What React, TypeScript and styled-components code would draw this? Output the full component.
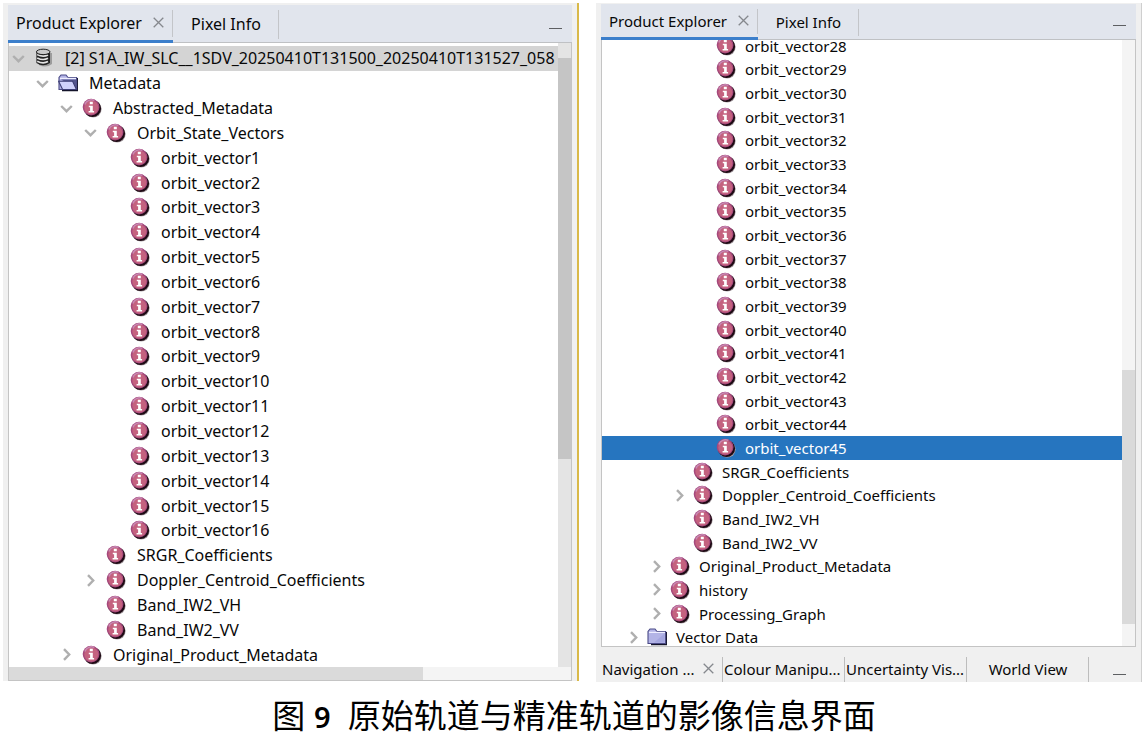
import React from "react";
import styled, { createGlobalStyle, css } from "styled-components";

const GlobalStyle = createGlobalStyle`
  *, *::before, *::after { box-sizing: border-box; }
  body { margin: 0; background: #fff; color: #080808; font-family: "Noto Sans", "Noto Sans CJK SC", sans-serif; }
  button { font: inherit; color: inherit; background: none; border: 0; padding: 0; margin: 0; cursor: pointer; }
  ul { list-style: none; margin: 0; padding: 0; }
`;

type Size = "large" | "small";

const Page = styled.div`
  display: flex;
  flex-direction: column;
  min-height: 100vh;
`;

const Panes = styled.main`
  flex: 1;
  display: grid;
  grid-template-columns: minmax(0, 576fr) minmax(0, 546fr);
  gap: 17px;
  padding: 3px 6px 0 3px;
`;

const Pane = styled.section<{ $size: Size }>`
  display: flex;
  flex-direction: column;
  background: #f0f0f0;
  font-size: ${(p) => (p.$size === "large" ? 16 : 15)}px;
  line-height: 20px;
  ${(p) =>
    p.$size === "large"
      ? css`
          padding: 2px 5px 0 5px;
          margin-bottom: 1px;
          border-right: 2px solid #d9b949;
        `
      : css`
          padding: 1px 5px 0 5px;
          border-right: 1px solid #cfcfcf;
        `}
`;

const TabBar = styled.div<{ $size: Size }>`
  display: flex;
  height: ${(p) => (p.$size === "large" ? 38 : 36)}px;
  background: #e1e5ed;
  border-bottom: 1px solid #bfc1c4;
`;

const Tab = styled.div<{ $width: number; $active?: boolean }>`
  position: relative;
  display: flex;
  align-items: center;
  justify-content: ${(p) => (p.$active ? "space-between" : "center")};
  width: ${(p) => p.$width}px;
  padding: ${(p) => (p.$active ? "0 9px 0 8px" : "0")};
  white-space: nowrap;
  &::after {
    content: "";
    position: absolute;
    top: 5px;
    bottom: 3px;
    right: 0;
    width: 1px;
    background: #c3c5c9;
  }
  ${(p) =>
    p.$active &&
    css`
      margin-bottom: -1px;
      border-bottom: 3px solid #3c7fcb;
    `}
`;

const MinimiseButton = styled.button`
  display: flex;
  align-items: flex-end;
  margin-left: auto;
  padding: 0 10px 13px;
  &::after {
    content: "";
    width: 13px;
    height: 1px;
    background: #5d5f62;
  }
`;

const CloseButton = styled.button`
  display: flex;
  color: #85888d;
`;

const TreeFrame = styled.div`
  flex: 1;
  display: grid;
  grid-template-columns: minmax(0, 1fr) 13px;
  grid-template-rows: minmax(0, 1fr) auto;
  background: #fff;
  border: 1px solid #c4c4c4;
  border-top: 0;
  overflow: hidden;
`;

const Tree = styled.ul<{ $size: Size }>`
  display: grid;
  grid-auto-rows: minmax(20px, 1fr);
  overflow: hidden;
  ${(p) => (p.$size === "large" ? "padding-top: 3px;" : "margin-top: -6px; margin-bottom: -3px;")}
`;

const TreeRow = styled.li<{ $size: Size; $level: number; $tone?: "root" | "selected" }>`
  display: flex;
  align-items: center;
  gap: ${(p) => (p.$size === "large" ? 9 : 7)}px;
  padding-left: ${(p) => (p.$size === "large" ? 3 + p.$level * 24 : 2 + p.$level * 23)}px;
  white-space: nowrap;
  ${(p) => p.$tone === "root" && "background: #d4d4d4;"}
  ${(p) =>
    p.$tone === "selected" &&
    css`
      background: #2675bf;
      color: #fff;
    `}
`;

const RowLabel = styled.span`
  padding-left: 2px;
`;

const Toggle = styled.button`
  display: flex;
  flex: none;
  width: 13px;
  justify-content: center;
  color: #afafaf;
`;

const ToggleSpace = styled.span`
  flex: none;
  width: 13px;
`;

const RowIcon = styled.svg`
  flex: none;
  width: 20px;
  height: 20px;
`;

const ScrollTrack = styled.div<{ $shade: string; $lead: number; $thumb: number; $rest: number; $thumbShade: string; $flat?: boolean }>`
  display: grid;
  background: ${(p) => p.$shade};
  ${(p) =>
    p.$flat
      ? css`
          grid-column: 1 / -1;
          height: 13px;
          grid-template-columns: ${p.$lead}fr ${p.$thumb}fr ${p.$rest}fr;
        `
      : css`
          grid-template-rows: ${p.$lead}fr ${p.$thumb}fr ${p.$rest}fr;
        `}
  &::after {
    content: "";
    background: ${(p) => p.$thumbShade};
    ${(p) => (p.$flat ? "grid-column: 2;" : "grid-row: 2;")}
  }
`;

const DockBar = styled.div`
  display: flex;
  height: 25px;
  margin-top: 10px;
`;

const DockTab = styled.div<{ $width: number; $align?: "center" | "closable" }>`
  display: flex;
  align-items: center;
  justify-content: ${(p) => (p.$align === "center" ? "center" : "space-between")};
  width: ${(p) => p.$width}px;
  padding: 0 ${(p) => (p.$align === "closable" ? 8 : 0)}px 2px 1px;
  border-right: 1px solid #bdbdbd;
  white-space: nowrap;
`;

const DockMinimise = styled(MinimiseButton)`
  padding-bottom: 7px;
`;

const Caption = styled.p`
  margin: 0;
  height: 59px;
  padding-top: 10px;
  text-align: center;
  white-space: pre-wrap;
  font-family: KaiTi, "Noto Sans", "Noto Sans CJK SC", sans-serif;
  font-size: 33px;
  line-height: 48px;
  color: #000;
`;

const FigureNumber = styled.span`
  font-size: 29px;
  font-weight: 600;
`;

const Chevron = ({ open }: { open?: boolean }) => (
  <svg width="13" height="13" viewBox="0 0 13 13" fill="none" stroke="currentColor" strokeWidth="2.4" aria-hidden="true">
    <path d={open ? "M1.2 4 L6.5 9.2 L11.8 4" : "M4 1.2 L9.2 6.5 L4 11.8"} />
  </svg>
);

const CloseIcon = () => (
  <svg width="11" height="11" viewBox="0 0 11 11" stroke="currentColor" strokeWidth="1.3" aria-hidden="true">
    <path d="M.7 .7 L10.3 10.3 M10.3 .7 L.7 10.3" />
  </svg>
);

const InfoIcon = () => (
  <RowIcon viewBox="0 0 20 20" aria-hidden="true">
    <ellipse cx="11.2" cy="11.2" rx="8.4" ry="8.4" fill="#aaa2a6" />
    <ellipse cx="10.5" cy="10.5" rx="8.6" ry="8.6" fill="#1e0a14" />
    <circle cx="9.1" cy="9.1" r="8.4" fill="#a5487c" />
    <circle cx="9.3" cy="9.5" r="7" fill="#c4627f" />
    <path d="M2.8 6.4 A7.2 7.2 0 0 1 12.4 2.4" fill="none" stroke="#c98ab4" strokeWidth="1.5" />
    <path d="M7.8 3.8h3v2.4h-3z M6.8 7.7h4v5.4h1.3v1.5H6.6v-1.5h1.5V9.2H6.8z" fill="#fff" />
  </RowIcon>
);

const FolderIcon = ({ open }: { open?: boolean }) => (
  <RowIcon viewBox="0 0 20 20" aria-hidden="true">
    <path d="M4 17.4 H19.4 V5" fill="none" stroke="#14142a" strokeWidth="1.5" />
    <path d="M1 16.5 V4.5 L3 2 H8 L10 4.5 H18.6 V16.5 Z" fill="#b3b4e6" stroke="#4b4b87" strokeWidth="1.1" />
    <path d="M2 5.4 H18" stroke="#eeeeff" strokeWidth="1.2" />
    {open ? (
      <>
        <path d="M3 6.5 H18 V15 Z" fill="#55578f" />
        <path d="M.6 8.3 H14.6 L18.4 16.5 H4.6 Z" fill="#cfd1fb" stroke="#3d3e75" strokeWidth="1.1" />
      </>
    ) : (
      <path d="M17.6 6.5 V15.6 H7 Z" fill="#9c9edb" opacity=".65" />
    )}
  </RowIcon>
);

const DatabaseIcon = () => (
  <RowIcon viewBox="0 0 20 20" aria-hidden="true">
    <path d="M5 5 H18 V16 Q12 20.5 5 17 Z" fill="#777" opacity=".6" />
    <path d="M2.4 4 V15 Q9 19.5 16 15 V4 Z" fill="#222" />
    <path d="M3.2 6.6 Q9 9.6 14 7 M3.2 9.9 Q9 12.9 14 10.3 M3.2 13.2 Q9 16.2 14 13.6" fill="none" stroke="#e4e4e4" strokeWidth="1.7" />
    <ellipse cx="9.2" cy="3.9" rx="6.8" ry="2.7" fill="#c9c9c9" stroke="#222" strokeWidth="1" />
  </RowIcon>
);

interface Node {
  label: string;
  level: number;
  icon?: "info" | "folder" | "folder-open" | "database";
  state?: "open" | "closed";
  tone?: "root" | "selected";
}

const vectors = (from: number, to: number, level: number): Node[] =>
  Array.from({ length: to - from + 1 }, (_, i) => ({ label: `orbit_vector${from + i}`, level }));

const originalOrbit: Node[] = [
  { label: "[2] S1A_IW_SLC__1SDV_20250410T131500_20250410T131527_058", level: 0, icon: "database", state: "open", tone: "root" },
  { label: "Metadata", level: 1, icon: "folder-open", state: "open" },
  { label: "Abstracted_Metadata", level: 2, state: "open" },
  { label: "Orbit_State_Vectors", level: 3, state: "open" },
  ...vectors(1, 16, 4),
  { label: "SRGR_Coefficients", level: 3 },
  { label: "Doppler_Centroid_Coefficients", level: 3, state: "closed" },
  { label: "Band_IW2_VH", level: 3 },
  { label: "Band_IW2_VV", level: 3 },
  { label: "Original_Product_Metadata", level: 2, state: "closed" },
];

const preciseOrbit: Node[] = [
  ...vectors(28, 44, 4),
  { label: "orbit_vector45", level: 4, tone: "selected" },
  { label: "SRGR_Coefficients", level: 3 },
  { label: "Doppler_Centroid_Coefficients", level: 3, state: "closed" },
  { label: "Band_IW2_VH", level: 3 },
  { label: "Band_IW2_VV", level: 3 },
  { label: "Original_Product_Metadata", level: 2, state: "closed" },
  { label: "history", level: 2, state: "closed" },
  { label: "Processing_Graph", level: 2, state: "closed" },
  { label: "Vector Data", level: 1, icon: "folder", state: "closed" },
];

const NodeIcon = ({ icon }: { icon?: Node["icon"] }) => {
  if (icon === "database") return <DatabaseIcon />;
  if (icon === "folder" || icon === "folder-open") return <FolderIcon open={icon === "folder-open"} />;
  return <InfoIcon />;
};

const ProductTree = ({ nodes, size }: { nodes: Node[]; size: Size }) => (
  <Tree $size={size} role="tree" aria-label="Products">
    {nodes.map((n) => (
      <TreeRow key={n.label} role="treeitem" aria-selected={n.tone === "selected"} $size={size} $level={n.level} $tone={n.tone}>
        {n.state ? (
          <Toggle type="button" aria-label={`Toggle ${n.label}`} aria-expanded={n.state === "open"}>
            <Chevron open={n.state === "open"} />
          </Toggle>
        ) : (
          <ToggleSpace />
        )}
        <NodeIcon icon={n.icon} />
        <RowLabel>{n.label}</RowLabel>
      </TreeRow>
    ))}
  </Tree>
);

const ExplorerTabs = ({ size, widths }: { size: Size; widths: [number, number] }) => (
  <TabBar $size={size}>
    <Tab $width={widths[0]} $active>
      <button type="button">Product Explorer</button>
      <CloseButton type="button" aria-label="Close Product Explorer">
        <CloseIcon />
      </CloseButton>
    </Tab>
    <Tab $width={widths[1]}>
      <button type="button">Pixel Info</button>
    </Tab>
    <MinimiseButton type="button" aria-label="Minimise" />
  </TabBar>
);

export default function App() {
  return (
    <>
      <GlobalStyle />
      <Page>
        <Panes>
          <Pane $size="large">
            <ExplorerTabs size="large" widths={[165, 106]} />
            <TreeFrame>
              <ProductTree nodes={originalOrbit} size="large" />
              <ScrollTrack $shade="#e4e4e4" $thumbShade="#c5c5c5" $lead={15} $thumb={401} $rest={208} />
              <ScrollTrack $flat $shade="#f4f4f4" $thumbShade="#dadada" $lead={0} $thumb={413} $rest={148} />
            </TreeFrame>
          </Pane>
          <Pane $size="small">
            <ExplorerTabs size="small" widths={[157, 101]} />
            <TreeFrame>
              <ProductTree nodes={preciseOrbit} size="small" />
              <ScrollTrack $shade="#f4f4f4" $thumbShade="#dadada" $lead={331} $thumb={254} $rest={22} />
            </TreeFrame>
            <DockBar>
              <DockTab $width={122} $align="closable">
                <button type="button">Navigation ...</button>
                <CloseButton type="button" aria-label="Close Navigation">
                  <CloseIcon />
                </CloseButton>
              </DockTab>
              <DockTab $width={122}>
                <button type="button">Colour Manipu...</button>
              </DockTab>
              <DockTab $width={122}>
                <button type="button">Uncertainty Vis...</button>
              </DockTab>
              <DockTab $width={122} $align="center">
                <button type="button">World View</button>
              </DockTab>
              <DockMinimise type="button" aria-label="Minimise" />
            </DockBar>
          </Pane>
        </Panes>
        <Caption>
          图 <FigureNumber>9</FigureNumber>{"  "}原始轨道与精准轨道的影像信息界面
        </Caption>
      </Page>
    </>
  );
}
